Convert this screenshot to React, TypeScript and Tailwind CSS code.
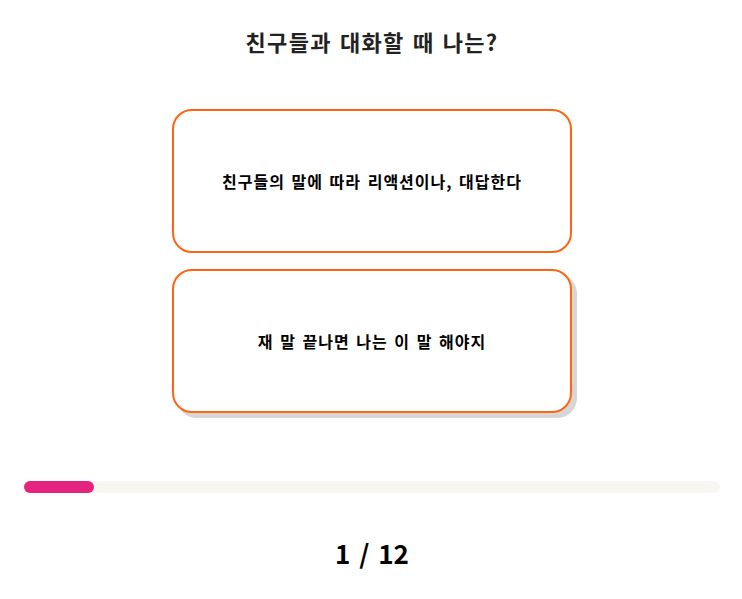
import { useState } from "react";

const options = [
    "친구들의 말에 따라 리액션이나, 대답한다",
    "재 말 끝나면 나는 이 말 해야지",
];

export default function App() {
    const [hovered, setHovered] = useState<number | null>(1);
    const step = 1;
    const total = 12;
    // bar shows a minimum of 10%
    const progress = Math.max((step / total) * 100, 10);

    return (
        <div
            className="w-full min-h-[599px] bg-white flex flex-col items-center pl-[2px]"
            style={{ fontFamily: '"Noto Sans CJK KR", "Noto Sans", sans-serif' }}
        >
            <h1 className="mt-[25px] text-[22px] leading-[32px] font-bold text-[#222] tracking-[1.3px] [word-spacing:2px]">
                친구들과 대화할 때 나는?
            </h1>

            <div className="mt-[52px] flex flex-col gap-4">
                {options.map((text, i) => (
                    <button
                        key={i}
                        onMouseEnter={() => setHovered(i)}
                        className={
                            "w-[400px] h-[144px] rounded-[20px] border-2 border-[#ff6414] bg-white flex items-center justify-center text-[16px] font-bold text-black tracking-[1px] [word-spacing:2px] " +
                            (hovered === i ? "shadow-[5px_5px_0_#d6d6d6]" : "")
                        }
                    >
                        {text}
                    </button>
                ))}
            </div>

            <div className="mt-[68px] w-[696px] h-3 rounded-full bg-[#f8f6f1]">
                <div className="h-3 rounded-full bg-[#e5247f]" style={{ width: `${progress}%` }} />
            </div>

            <p className="mt-[42px] text-[26px] leading-[36px] font-bold text-black [word-spacing:3px]">
                {step} / {total}
            </p>
        </div>
    );
}
